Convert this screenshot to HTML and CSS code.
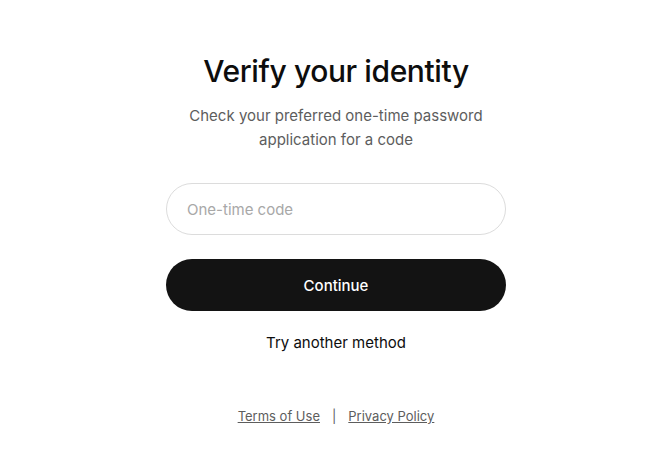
FILE: index.html
```html
<!DOCTYPE html>
<html lang="en">
<head>
    <meta charset="UTF-8">
    <meta name="viewport" content="width=device-width, initial-scale=1.0">
    <title>Verify your identity</title>
    <link rel="stylesheet" href="styles.css">
</head>
<body>
    <main class="container">
        <h1 class="title">Verify your identity</h1>
        <p class="subtitle">Check your preferred one-time password application for a code</p>

        <form class="form" onsubmit="return false;">
            <input class="code-input" type="text" placeholder="One-time code">
            <button class="continue" type="submit">Continue</button>
        </form>

        <a class="alt-method" href="#">Try another method</a>

        <footer class="footer">
            <a href="#">Terms of Use</a>
            <span class="sep">|</span>
            <a href="#">Privacy Policy</a>
        </footer>
    </main>
</body>
</html>
```

FILE: styles.css
```css
body {
    font-family: 'Inter', 'Liberation Sans', sans-serif;
    background-color: #ffffff;
    margin: 0;
    padding-left: 4px;
    color: #0d0d0d;
}

.container {
    width: 340px;
    margin: 0 auto;
    padding-top: 51px;
    display: flex;
    flex-direction: column;
    align-items: center;
    text-align: center;
}

.title {
    font-size: 30px;
    font-weight: 500;
    line-height: 40px;
    margin: 0;
    letter-spacing: -0.4px;
}

.subtitle {
    font-size: 15px;
    line-height: 24px;
    color: #5d5d5d;
    margin: 13px 0 0;
    width: 300px;
}

.form {
    width: 100%;
    margin-top: 31px;
    display: flex;
    flex-direction: column;
    gap: 24px;
}

.code-input {
    box-sizing: border-box;
    width: 100%;
    height: 52px;
    border: 1px solid #dcdcdc;
    border-radius: 26px;
    padding: 0 20px;
    font-family: inherit;
    font-size: 15px;
    color: #0d0d0d;
    outline: none;
}

.code-input::placeholder {
    color: #a8a8a8;
}

.continue {
    height: 52px;
    width: 100%;
    border: none;
    border-radius: 26px;
    background-color: #131313;
    color: #ffffff;
    font-family: inherit;
    font-size: 15px;
    font-weight: 500;
    cursor: pointer;
}

.alt-method {
    margin-top: 20px;
    font-size: 15px;
    line-height: 24px;
    color: #0d0d0d;
    text-decoration: none;
}

.footer {
    margin-top: 51px;
    font-size: 13px;
    line-height: 20px;
    color: #5d5d5d;
    display: flex;
    gap: 12px;
}

.footer a {
    color: #5d5d5d;
    text-decoration: underline;
}
```
